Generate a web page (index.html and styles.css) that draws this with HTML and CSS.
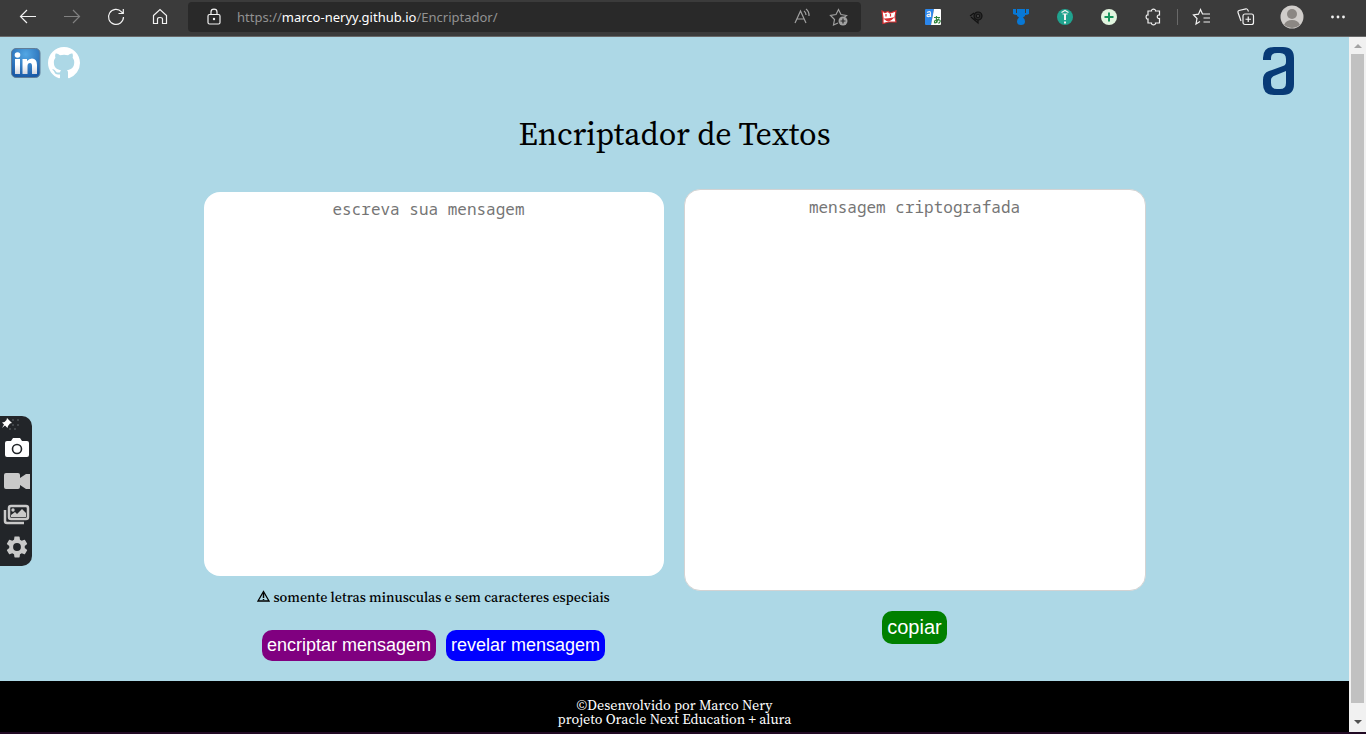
FILE: index.html
```html
<!DOCTYPE html>
<html lang="pt-br">
<head>
<meta charset="UTF-8">
<meta name="viewport" content="width=device-width, initial-scale=1">
<title>Encriptador de Textos</title>
<link rel="stylesheet" href="styles.css">
</head>
<body class="window">
<div class="toolbar">
  <button class="tool" aria-label="Voltar"><svg width="20" height="20" viewBox="0 0 20 20"><path d="M18 9.500H2.500M9 3L2.500 9.500L9 16"/></svg></button>
  <button class="tool dim" aria-label="Avançar"><svg width="20" height="20" viewBox="0 0 20 20"><path d="M2 9.500H17.500M11 3L17.500 9.500L11 16"/></svg></button>
  <button class="tool" aria-label="Atualizar"><svg width="20" height="20" viewBox="0 0 20 20"><path d="M17.500 10A7.500 7.500 0 1 1 15.500 4.800L17 6.500M17.300 2V6.500H12.500"/></svg></button>
  <button class="tool" aria-label="Início"><svg width="20" height="20" viewBox="0 0 20 20"><path d="M3.500 8.500L10 2.500L16.500 8.500V16.500H12.500V12C12.500 10.800 11.500 10.500 10 10.500S7.500 10.800 7.500 12V16.500H3.500Z"/></svg></button>
  <div class="address">
    <svg class="lock" width="20" height="20" viewBox="0 0 20 20"><rect x="4" y="7.500" width="12" height="9.500" rx="1.500"/><path d="M7 7.500V5C7 1.200 13 1.200 13 5V7.500"/><circle class="solid" cx="10" cy="12" r="1.200"/></svg>
    <a class="url" href="#">https://<span class="host">marco-neryy.github.io</span>/Encriptador/</a>
    <button class="inner" aria-label="Ler em voz alta"><svg width="20" height="20" viewBox="0 0 20 20"><path d="M2 16L7.500 4L13 16M4 12H11M11 4C12.500 5 13 6.500 13 8M13 2C15.500 3.800 16.200 6 16 9"/></svg></button>
    <button class="inner" aria-label="Adicionar aos favoritos"><svg width="20" height="20" viewBox="0 0 20 20"><path d="M9 16L4.500 18L5.500 12.500L1.500 8.500L7 7.500L9.500 2.500L12 7.500L17.500 8.500L15.500 10"/><circle class="badge" cx="14" cy="14" r="4.500"/><path class="cut" d="M14 11.500V16.500M11.500 14H16.500"/></svg></button>
  </div>
  <button class="tool" aria-label="Extensão de leitura"><svg width="18" height="18" viewBox="0 0 18 18"><path d="M2 3L5 4.500L8 3.500L10 5L16 3L15 9L16 14L9 14L3 15.500L3 10Z" fill="#fff" stroke="#d92e31"/><path d="M6 6V8.500M10.500 6V8.500M5 11Q9 15 13 10Q9 11 5 11Z" fill="#d92e31" stroke="#d92e31"/></svg></button>
  <button class="tool" aria-label="Tradutor"><svg width="18" height="18" viewBox="0 0 18 18"><path d="M2 1H10L7 17H2Q1 17 1 16V2Q1 1 2 1Z" fill="#2b87ed" stroke="none"/><path d="M10 1H16Q17 1 17 2V16Q17 17 16 17H7Z" fill="#fff" stroke="none"/><path d="M3 4.500Q6.500 2.500 6.500 5V9M6.500 6.500Q3 6 3 8Q4 9.500 6.500 7.500"/><path d="M10 9.500H16M12.500 8Q12 12 13 15M15 10.500Q12 16 10.500 14.500Q10 12 14 11.500Q17 12 16 14L14.500 15.500" stroke="#33863e"/></svg></button>
  <button class="tool" aria-label="Conta-gotas"><svg width="18" height="18" viewBox="0 0 18 18"><g stroke="#121212"><path d="M2 8L6 5M3 9L10 15V11"/><circle cx="10" cy="8" r="4" fill="#292929"/><circle cx="10" cy="8" r="1.500" fill="#555"/></g></svg></button>
  <button class="tool" aria-label="Medalha"><svg width="18" height="18" viewBox="0 0 18 18"><path fill="#0878d5" stroke="none" d="M1 1H4V5H5V1H13V5H14V1H17V6Q15 7 13 7V8L11 9.500Q13 11 13 13.500Q13 17 9 17Q5 17 5 13.500Q5 11 7 9.500L5 8V7Q3 7 1 6Z"/></svg></button>
  <button class="tool" aria-label="Extensão verde"><svg width="18" height="18" viewBox="0 0 18 18"><circle cx="9" cy="9" r="8" fill="#20a38f" stroke="none"/><path d="M5.500 4.500L9 2.500L12.500 4.500M6.500 6H11.500"/><path d="M9 6V12M9 13.500V15.500" stroke-width="2"/></svg></button>
  <button class="tool" aria-label="Extensão adicionar"><svg width="18" height="18" viewBox="0 0 18 18"><circle cx="9" cy="9" r="8" fill="#e2f5df" stroke="none"/><path d="M9 4.500V13.500M4.500 9H13.500" stroke="#16965d" stroke-width="2"/></svg></button>
  <button class="tool" aria-label="Extensões"><svg width="20" height="20" viewBox="0 0 20 20"><path d="M5 4H8.500C8 1.500 13 1.500 12.500 4H16.500V8C13.500 7.500 13.500 12 16.500 11.500V16H12.500C13 18.500 8 18.500 8.500 16H5V12C2.500 12.500 2.500 7.500 5 8Z"/></svg></button>
  <span class="divider"></span>
  <button class="tool" aria-label="Favoritos"><svg width="20" height="20" viewBox="0 0 20 20"><path d="M8 14.500L4 17L5 11.500L1.500 8L6.500 7.200L8.500 2.500L10.500 7H18M11.500 11H18M11.500 15H18"/></svg></button>
  <button class="tool" aria-label="Coleções"><svg width="20" height="20" viewBox="0 0 20 20"><path d="M5 14L2 5.500Q1.500 4 3 3.500L10 1.800Q11.500 1.500 12.500 4.500"/><rect x="7" y="7" width="10.500" height="10.500" rx="2"/><path d="M12.250 9.500V15M9.500 12.250H15"/></svg></button>
  <button class="tool profile" aria-label="Perfil"><svg width="24" height="24" viewBox="0 0 24 24"><circle cx="12" cy="12" r="11.500" fill="#d0cdca" stroke="none"/><circle cx="12" cy="9" r="5" fill="#8b8783" stroke="none"/><path d="M4 20Q6 15 12 15T20 20Q12 26 4 20Z" fill="#8b8783" stroke="none"/></svg></button>
  <button class="tool" aria-label="Mais opções"><svg width="20" height="20" viewBox="0 0 20 20"><g class="solid"><circle cx="4.500" cy="10" r="1.400"/><circle cx="10" cy="10" r="1.400"/><circle cx="15.500" cy="10" r="1.400"/></g></svg></button>
</div>

<div class="viewport">
  <div class="page">
    <header class="header">
      <nav class="social">
        <a href="#" aria-label="LinkedIn"><svg width="32" height="32" viewBox="0 0 32 32"><defs><radialGradient id="blue" cx=".5" cy=".2" r=".8"><stop offset="0" stop-color="#53a7e4"/><stop offset="1" stop-color="#1a5aa7"/></radialGradient><linearGradient id="silver" x2="0" y2="1"><stop offset=".4" stop-color="#fff"/><stop offset="1" stop-color="#d2d6df"/></linearGradient></defs><rect x="1.500" y="1.500" width="28.500" height="29" rx="4.500" fill="url(#blue)" stroke="#617d97"/><circle cx="7.500" cy="8" r="2.800" fill="#fff"/><path fill="url(#silver)" d="M5 12H10V27H5ZM12.500 12H17V14Q19 11.500 22 11.500Q27 11.500 27 18V27H22V19Q22 16 20 16Q17.500 16 17.500 19V27H12.500Z"/></svg></a>
        <a href="#" aria-label="GitHub"><svg width="32" height="32" viewBox="0 0 16 16"><path fill="#fff" d="M8 0C3.580 0 0 3.580 0 8c0 3.540 2.290 6.530 5.470 7.590.4.070.55-.17.55-.38 0-.19-.01-.82-.01-1.490-2.010.37-2.530-.49-2.690-.94-.09-.23-.48-.94-.82-1.130-.28-.15-.68-.52-.01-.53.63-.01 1.080.58 1.230.82.72 1.210 1.870.87 2.330.66.07-.52.28-.87.51-1.070-1.780-.2-3.640-.89-3.640-3.950 0-.87.31-1.590.82-2.150-.08-.2-.36-1.020.08-2.120 0 0 .67-.21 2.200.82.64-.18 1.320-.27 2-.27s1.360.09 2 .27c1.530-1.040 2.200-.82 2.200-.82.44 1.100.16 1.920.08 2.120.51.56.82 1.270.82 2.150 0 3.070-1.870 3.750-3.650 3.950.29.25.54.73.54 1.480 0 1.070-.01 1.930-.01 2.200 0 .21.15.46.55.38A8.010 8.010 0 0 0 16 8c0-4.420-3.580-8-8-8z"/></svg></a>
      </nav>
      <a class="brand" href="#" aria-label="Alura"><svg width="34" height="50" viewBox="0 0 34 50"><path fill="#083a76" fill-rule="evenodd" d="M1 14V12Q1 1 12 1H21Q32 1 32 12V38Q32 49 21 49H12Q1 49 1 38V34Q1 27 7 25L21 20Q24 19 24 16V13Q24 7 18 7H15Q9 7 9 12V14ZM24 25L13 29.500Q9 31 9 34V37Q9 43 15 43H18Q24 43 24 37Z"/></svg></a>
    </header>
    <h1 class="title">Encriptador de Textos</h1>
    <main class="panels">
      <section class="panel source">
        <textarea class="box input" aria-label="Mensagem" placeholder="escreva sua mensagem"></textarea>
        <p class="note"><svg width="13" height="12" viewBox="0 0 13 12" aria-hidden="true"><path d="M6.500 1.500L12 11H1Z" fill="none" stroke="#000" stroke-width="1.300"/><path d="M6.500 3V8M6.500 9V10" stroke="#000" stroke-width="1.500"/></svg> somente letras minusculas e sem caracteres especiais</p>
        <div class="actions">
          <button class="action encrypt">encriptar mensagem</button>
          <button class="action reveal">revelar mensagem</button>
        </div>
      </section>
      <section class="panel">
        <textarea class="box output" aria-label="Resultado" placeholder="mensagem criptografada"></textarea>
        <button class="action copy">copiar</button>
      </section>
    </main>
    <footer class="footer">
      ©Desenvolvido por Marco Nery<br>
      projeto Oracle Next Education + alura
    </footer>
  </div>
  <div class="scrollbar" aria-hidden="true">
    <span class="arrow up"></span><span class="thumb"></span><span class="arrow down"></span>
  </div>
</div>

<aside class="capture">
  <svg class="pin" width="24" height="14" viewBox="0 0 24 14"><g fill="#41464a"><path d="M12 2h2v2h-2zM17 2h2v2h-2zM12 7h2v2h-2zM17 7h2v2h-2zM9 11h2v2H9zM14 11h2v2h-2z"/></g><path d="M7 1L12 6L10 6.500L8 9L7.500 11L5 8.500L2 11L4 7.500L2 5.500L4.500 5L6.500 3Z" fill="#fff"/></svg>
  <button class="snap" aria-label="Capturar tela"><svg width="26" height="24" viewBox="0 0 26 24"><path fill="#fff" d="M3 5H7L9 2H16L18 5H23Q25 5 25 7V19Q25 21 23 21H3Q1 21 1 19V7Q1 5 3 5Z"/><circle cx="13" cy="13" r="4.500" fill="none" stroke="#222529" stroke-width="1.600"/></svg></button>
  <button class="snap" aria-label="Gravar vídeo"><svg width="28" height="24" viewBox="0 0 28 24"><path fill="#c9c9c9" d="M3 4H15Q17 4 17 6V9L23 5H27V20H23L17 16V18Q17 20 15 20H3Q1 20 1 18V6Q1 4 3 4Z"/></svg></button>
  <button class="snap" aria-label="Galeria"><svg width="28" height="24" viewBox="0 0 28 24"><rect x="6" y="4" width="19" height="13" rx="2" fill="none" stroke="#c9c9c9" stroke-width="2.500"/><path d="M2 8V19Q2 21 4 21H21" fill="none" stroke="#c9c9c9" stroke-width="2.500"/><circle cx="10" cy="8" r="1.700" fill="#c9c9c9"/><path fill="#c9c9c9" d="M8 15V13L12 10L14 12L19 7L23 11V15Z"/></svg></button>
  <button class="snap" aria-label="Configurações"><svg width="26" height="26" viewBox="0 0 24 24"><path fill="#c9c9c9" d="M19.140 12.940c.04-.3.060-.61.060-.94s-.02-.64-.07-.94l2.030-1.580a.49.490 0 0 0 .12-.61l-1.920-3.320a.49.490 0 0 0-.59-.22l-2.390.96a7 7 0 0 0-1.620-.94l-.36-2.540a.48.480 0 0 0-.48-.41h-3.840c-.24 0-.43.17-.47.41l-.36 2.540c-.59.24-1.130.57-1.620.94l-2.390-.96a.48.480 0 0 0-.59.220L2.740 8.870a.48.480 0 0 0 .12.610l2.030 1.580a6 6 0 0 0 0 1.880l-2.030 1.580a.49.490 0 0 0-.12.610l1.920 3.320c.12.220.37.290.59.220l2.390-.96c.5.380 1.030.7 1.620.94l.36 2.540c.05.240.24.410.48.410h3.840c.24 0 .44-.17.470-.41l.36-2.540a7 7 0 0 0 1.620-.94l2.390.96c.22.080.47 0 .59-.22l1.920-3.320a.48.480 0 0 0-.12-.61zM12 15.600A3.600 3.600 0 1 1 12 8.400a3.600 3.600 0 0 1 0 7.200z"/></svg></button>
</aside>
</body>
</html>
```
FILE: styles.css
```css
* { box-sizing: border-box; }

.window {
  margin: 0;
  min-height: 100vh;
  display: flex;
  flex-direction: column;
  border-bottom: 2px solid #210a24;
  background: #add8e6;
  font-family: "Source Serif 4", "Source Serif Pro", "Liberation Serif", serif;
}

button { font: inherit; cursor: pointer; }

/* Browser toolbar */
.toolbar {
  display: flex;
  align-items: center;
  height: 37px;
  padding: 0 6px 3px;
  background: #3b3b3b;
  border-bottom: 1px solid #686868;
}
.tool, .inner {
  display: flex;
  align-items: center;
  justify-content: center;
  flex: none;
  width: 44px;
  height: 30px;
  padding: 0;
  border: 0;
  background: none;
}
.toolbar svg { fill: none; stroke: #f2f2f2; stroke-width: 1.2; }
.toolbar .dim svg { stroke: #818181; }
.toolbar .solid { fill: #f2f2f2; stroke: none; }
.tool.profile { width: 48px; }
.divider { width: 1px; height: 16px; margin: 0 2px; background: #696969; }
.address {
  display: flex;
  align-items: center;
  flex: 1;
  min-width: 0;
  height: 30px;
  margin: 0 6px;
  padding: 0 4px 0 16px;
  border-radius: 4px;
  background: #292929;
}
.lock { flex: none; }
.url {
  flex: 1;
  min-width: 0;
  padding-left: 13px;
  overflow: hidden;
  white-space: nowrap;
  font: 13px/20px "Segoe UI", "Noto Sans", sans-serif;
  color: #929292;
  text-decoration: none;
}
.host { color: #fff; }
.inner { width: 36px; }
.toolbar .inner svg { stroke: #a0a0a0; }
.toolbar .badge { fill: #a0a0a0; stroke: none; }
.toolbar .cut { stroke: #292929; }

/* Page */
.viewport { display: flex; flex: 1; }
.page { display: flex; flex-direction: column; flex: 1; min-width: 0; }
.header {
  display: flex;
  justify-content: space-between;
  align-items: flex-start;
  padding: 9px 53px 0 10px;
}
.social { display: flex; gap: 6px; padding-top: 1px; }
.social svg, .brand svg { display: block; }
.title {
  margin: 16px 0 33px;
  text-align: center;
  font-size: 32px;
  line-height: 44px;
  font-weight: 400;
}
.panels {
  display: flex;
  justify-content: center;
  align-items: flex-start;
  flex: 1;
  gap: 20px;
  padding-bottom: 20px;
}
.panel { display: flex; flex-direction: column; align-items: center; width: 462px; }
.panel.source { width: 460px; padding-top: 3px; }
.box {
  width: 100%;
  padding: 5px;
  border: 0;
  border-radius: 16px;
  background: #fff;
  resize: none;
  outline: 0;
  text-align: center;
  font: 16px/24px Consolas, "Noto Sans Mono", "DejaVu Sans Mono", monospace;
}
.box::placeholder { color: #757575; opacity: 1; }
.input { height: 384px; padding-right: 15px; }
.output { height: 402px; border: 1px solid #d3d3d3; }
.note {
  margin: 11px 0 23px;
  font-size: 14px;
  line-height: 20px;
  font-weight: 500;
}
.actions { display: flex; gap: 10px; }
.action {
  padding: 5px;
  border: 0;
  border-radius: 10px;
  color: #fff;
  font: 18px/21px Arial, "Liberation Sans", sans-serif;
}
.encrypt { background: purple; }
.reveal { background: blue; }
.copy { margin-top: 20px; background: green; font-size: 20px; line-height: 23px; }
.footer {
  padding: 17px 8px 6px;
  background: #000;
  color: #fff;
  text-align: center;
  font-size: 14px;
  line-height: 14px;
}

/* Scroll track */
.scrollbar {
  display: flex;
  flex-direction: column;
  align-items: center;
  width: 17px;
  background: #f1f1f1;
}
.thumb { flex: 1; width: 13px; background: #c1c1c1; }
.arrow { display: flex; align-items: center; justify-content: center; height: 17px; }
.arrow::before { content: ""; border: 4px solid transparent; }
.up::before { border-top: 0; border-bottom-color: #a3a3a3; }
.down { height: 29px; padding-top: 9px; }
.down::before { border-bottom: 0; border-top-color: #505050; }

/* Floating capture palette */
.capture {
  position: fixed;
  left: 0;
  top: 416px;
  display: flex;
  flex-direction: column;
  align-items: center;
  width: 32px;
  padding: 1px 0 3px;
  border-radius: 0 10px 10px 0;
  background: #222529;
}
.snap {
  display: flex;
  align-items: center;
  justify-content: center;
  width: 32px;
  height: 33px;
  padding: 0 0 0 1px;
  border: 0;
  background: none;
}
.pin { align-self: flex-start; }
```
